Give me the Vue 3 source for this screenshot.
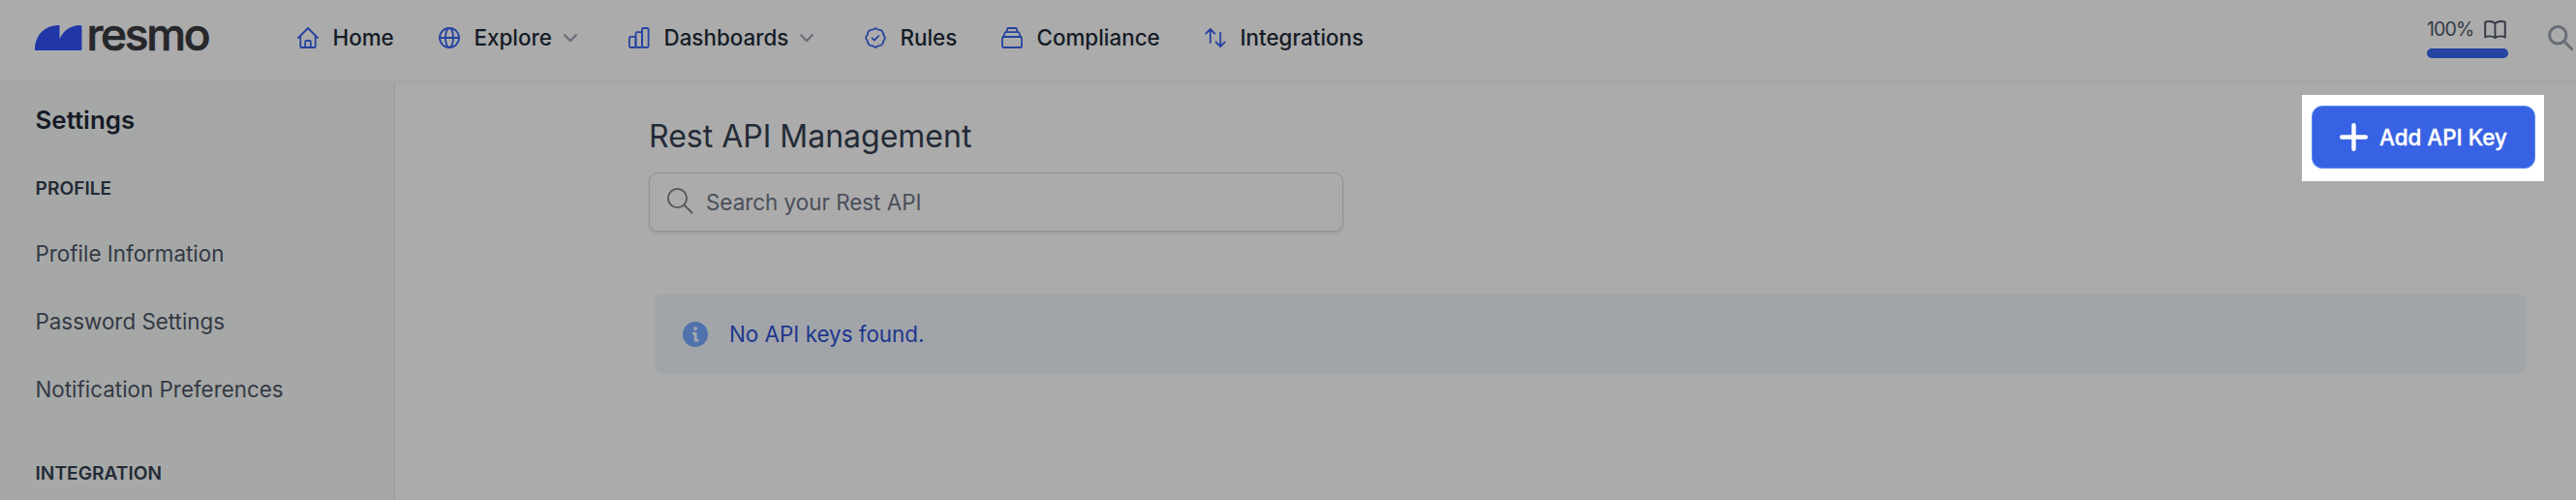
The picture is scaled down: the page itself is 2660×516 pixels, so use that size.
<script setup>
const nav = [
  { label: 'Home', icon: 'home' },
  { label: 'Explore', icon: 'globe', menu: true },
  { label: 'Dashboards', icon: 'chart', menu: true },
  { label: 'Rules', icon: 'badge' },
  { label: 'Compliance', icon: 'stack' },
  { label: 'Integrations', icon: 'arrows' },
]
const profileLinks = ['Profile Information', 'Password Settings', 'Notification Preferences']
</script>

<template>
  <div class="page">
    <header class="header">
      <div class="logo">
        <svg width="49" height="26" viewBox="0 0 49 26"><path d="M0 26C0 10 10 0 25.500 0V14.500C29 6 36 .3 47 0Q48.500 0 48.500 1.500V24.500Q48.500 26 47 26Z" fill="#2137a8" /></svg>
        <span class="wordmark">resmo</span>
      </div>
      <nav class="nav">
        <a v-for="n in nav" :key="n.label" class="nav-item">
          <svg class="nav-icon" width="22" height="22" viewBox="0 0 22 22">
            <g v-if="n.icon === 'home'"><path d="M1 11 11 1l10 10M3.300 9v11q0 1 1 1h13.400q1 0 1-1V9M8.200 21v-6q0-1 1-1h3.600q1 0 1 1v6" /></g>
            <g v-else-if="n.icon === 'globe'"><circle cx="11" cy="11" r="10" /><ellipse cx="11" cy="11" rx="4" ry="10" /><path d="M1 11h20" /></g>
            <g v-else-if="n.icon === 'chart'"><rect x=".9" y="9.800" width="6.600" height="11.200" rx="1.400" /><rect x="7.500" y="5.200" width="6.500" height="15.800" rx="1.400" /><rect x="14" y="1" width="6.600" height="20" rx="1.400" /></g>
            <g v-else-if="n.icon === 'badge'"><path d="M11 1q1.300 1.500 3.200 1.600 2.200-.2 3.700 1.500 1.300 1.300 1.200 3.300.3 1 1.300 2.100.8 1.500 0 3-1 1.100-1.300 2.500 0 2-1.500 3.100-1.400 1.200-3.400 1.200Q12.400 19.600 11 21q-1.400-1.400-3.200-1.700-2 0-3.400-1.200Q2.900 17 2.900 15q-.3-1.400-1.300-2.500-.8-1.500 0-3Q2.600 8.400 2.900 7.400 2.800 5.400 4.100 4.100q1.500-1.700 3.700-1.500Q9.700 2.500 11 1Z" /><path d="m7.600 11.400 2.300 2.200 4.400-4.600" /></g>
            <g v-else-if="n.icon === 'stack'"><rect x="1" y="10" width="20" height="11" rx="1.600" /><path d="M2 10 3.600 6q.3-.8 1.200-.8h12.400q.9 0 1.200.8L20 10M5.200 5.200 6.200 1.800q.2-.8 1-.8h7.600q.8 0 1 .8l1 3.400" /></g>
            <g v-else><path d="M5.800 16V2.400M1.200 6.600l4.600-4.600 4.600 4.600M16.200 6v13.600M11.600 15.400l4.600 4.600 4.600-4.600" /></g>
          </svg>
          <span>{{ n.label }}</span>
          <svg v-if="n.menu" class="chevron" width="14" height="9" viewBox="0 0 14 9"><path d="m1.200 1.200 5.800 6 5.800-6" /></svg>
        </a>
      </nav>
      <div class="progress">
        <div class="progress-top">
          <span>100%</span>
          <svg width="23" height="19" viewBox="0 0 23 19"><path d="M11.500 3Q8.500.8 5 1 3 1 1.200 1.800v15.600Q3 16.400 5.500 16.400q3.500 0 6 1.600 2.500-1.600 6-1.600 2.500 0 4.300 1V1.800Q20 1 18 1q-3.500-.2-6.500 2V18" fill="none" stroke="#343944" stroke-width="1.900" stroke-linejoin="round" stroke-linecap="round" /></svg>
        </div>
        <div class="bar"></div>
      </div>
      <svg class="top-search" width="27" height="27" viewBox="0 0 27 27"><circle cx="10.300" cy="10.300" r="8.700" /><path d="m16.800 16.800 8 8" /></svg>
    </header>

    <div class="body">
      <aside class="sidebar">
        <h2>Settings</h2>
        <h3>PROFILE</h3>
        <a v-for="l in profileLinks" :key="l">{{ l }}</a>
        <h3 class="second">INTEGRATION</h3>
      </aside>
      <main class="main">
        <div class="title-row">
          <div>
            <h1>Rest API Management</h1>
            <div class="search">
              <svg width="27" height="27" viewBox="0 0 27 27"><circle cx="10.500" cy="10.500" r="9.600" /><path d="m17.300 17.300 8.200 8.200" /></svg>
              <span>Search your Rest API</span>
            </div>
          </div>
          <div class="spotlight">
            <button>
              <svg width="29" height="29" viewBox="0 0 29 29"><path d="M14.500 2.200v24.600M2.200 14.500h24.600" /></svg>
              <span>Add API Key</span>
            </button>
          </div>
        </div>
        <div class="alert">
          <svg width="26" height="26" viewBox="0 0 26 26"><circle cx="13" cy="13" r="13" fill="#4f72ad" /><circle cx="13" cy="7" r="2" fill="#a1a5aa" /><path d="M11.200 12.300h2v6.900h2" fill="none" stroke="#a1a5aa" stroke-width="3" stroke-linecap="round" stroke-linejoin="round" /></svg>
          <span>No API keys found.</span>
        </div>
      </main>
    </div>
  </div>
</template>

<style>
body { background: #ababab; overflow: hidden; }
</style>
<style scoped>
.page { width: 2660px; height: 516px; overflow: hidden; background: #ababab; font-family: Inter, sans-serif; font-size: 22.4px; color: #151b26; }
.page * { box-sizing: border-box; }
svg { display: block; flex: none; }
span, a, h1, h2, h3 { white-space: nowrap; }
.header { height: 86px; border-bottom: 3px solid #a5a5a5; display: flex; align-items: flex-start; padding-left: 36px; }
.logo { display: flex; width: 271px; padding-top: 26px; }
.wordmark { margin-left: 4.5px; font-size: 46px; font-weight: 500; -webkit-text-stroke: .7px #26272a; line-height: 34px; margin-top: -8px; letter-spacing: -2.3px; color: #26272a; }
.nav { display: grid; grid-template-columns: 146px 196px 244px 141px 210px 180px; height: 78px; align-items: center; font-weight: 500; }
.nav-item { display: flex; align-items: center; }
.nav-item span { line-height: 26px; margin-top: -1px; }
.nav-icon { fill: none; stroke: #2543a0; stroke-width: 1.8; stroke-linecap: round; stroke-linejoin: round; margin-right: 14.5px; }
.chevron { margin-left: 12px; fill: none; stroke: #6b6f7a; stroke-width: 2.2; stroke-linecap: round; stroke-linejoin: round; }
.progress { margin-left: auto; width: 84px; padding-top: 18px; }
.progress-top { display: flex; justify-content: space-between; align-items: center; height: 25px; font-size: 19.6px; letter-spacing: -.9px; color: #343944; padding-right: 2px; }
.progress-top span { margin-top: -1px; }
.bar { height: 10px; border-radius: 5px; background: #2543a0; margin-top: 7px; }
.top-search { margin: 26px 2px 0 41px; fill: none; stroke: #686d77; stroke-width: 3; stroke-linecap: round; }
.body { display: flex; height: 430px; }
.sidebar { width: 408px; border-right: 1px solid #989a9a; background: #a6a8a7; padding: 18px 0 0 36.5px; }
h1, h2, h3 { margin: 0; }
h2 { font-size: 25.9px; font-weight: 600; line-height: 40px; }
h3 { font-size: 19.2px; font-weight: 600; line-height: 30px; margin: 35px 0 18px; color: #232a36; }
h3.second { margin-top: 36px; }
.sidebar a { display: block; line-height: 70px; color: #343944; }
.main { flex: 1; padding: 12px 33px 0 262px; }
.title-row { display: flex; justify-content: space-between; height: 205px; }
h1 { font-size: 32px; font-weight: 400; line-height: 40px; margin-top: 23px; color: #232a36; }
.search { width: 717px; height: 61px; margin-top: 17px; border: 1px solid #8f9196; border-radius: 9px; display: flex; align-items: center; padding-left: 18px; box-shadow: 0 2px 3px rgba(0, 0, 0, .1); color: #4a4f5a; }
.search svg { margin-right: 13px; margin-top: -3px; fill: none; stroke: #555; stroke-width: 1.8; stroke-linecap: round; }
.spotlight { width: 250px; height: 89px; background: #fff; padding: 11px 9px 13px 10px; }
button { width: 231px; height: 65px; border: 1px solid #5f8cf0; border-radius: 11px; background: #3762e3; color: #fff; display: flex; align-items: center; padding: 0 0 0 28px; font: 500 22.4px Inter, sans-serif; -webkit-text-stroke: .4px #fff; }
button svg { fill: none; stroke: #fff; stroke-width: 4.4; stroke-linecap: round; margin-right: 12px; }
.alert { width: 1933px; height: 83px; margin-left: 6px; border-radius: 9px; background: #a1a5aa; display: flex; align-items: center; padding-left: 29px; color: #20368f; }
.alert svg { margin-right: 22px; }
</style>
